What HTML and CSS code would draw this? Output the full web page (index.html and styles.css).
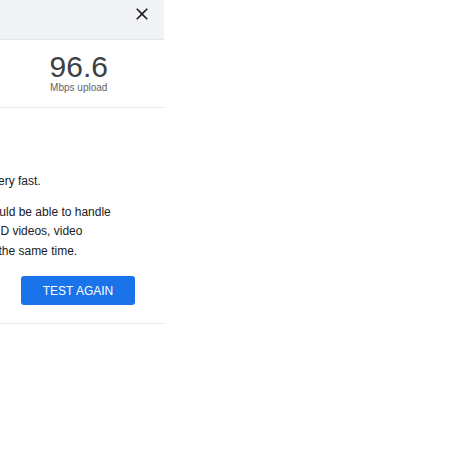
FILE: index.html
```html
<!DOCTYPE html>
<html lang="en">
<head>
<meta charset="utf-8">
<title>Speed test</title>
<link rel="stylesheet" href="styles.css">
</head>
<body>
<div class="panel">
  <div class="header">
    <svg class="close" viewBox="0 0 24 24" width="20" height="20" aria-label="Close">
      <path d="M19 6.41L17.59 5 12 10.59 6.41 5 5 6.41 10.59 12 5 17.59 6.41 19 12 13.41 17.59 19 19 17.59 13.41 12z" fill="#202124"/>
    </svg>
  </div>
  <div class="stats">
    <div class="stat"></div>
    <div class="stat">
      <div class="value">96.6</div>
      <div class="label">Mbps upload</div>
    </div>
  </div>
  <div class="body">
    <p class="msg first">Your Internet connection is very fast.</p>
    <p class="msg">Your Internet connection should be able to handle multiple devices streaming HD videos, video conferencing and gaming at the same time.</p>
    <div class="actions">
      <button class="btn">TEST AGAIN</button>
    </div>
  </div>
</div>
</body>
</html>
```

FILE: styles.css
```css
html, body {
  margin: 0;
  padding: 0;
  background: #ffffff;
  overflow: hidden;
}
body {
  font-family: "Liberation Sans", Arial, sans-serif;
  color: #202124;
}
.panel {
  width: 341px;
  margin-left: -177px;
  background: #ffffff;
}
.header {
  height: 40px;
  box-sizing: border-box;
  background: #f1f3f4;
  border-bottom: 1px solid #e3e5e8;
  display: flex;
  justify-content: flex-end;
  align-items: flex-start;
  padding: 4px 12px 0 0;
}
.close {
  display: block;
}
.stats {
  display: grid;
  grid-template-columns: 1fr 1fr;
  padding: 12px 0 13px;
  border-bottom: 1px solid #e8eaed;
}
.stat {
  display: flex;
  flex-direction: column;
  align-items: center;
}
.value {
  font-size: 30px;
  line-height: 30px;
  color: #3c4043;
}
.label {
  font-size: 10px;
  line-height: 12px;
  color: #5f6368;
}
.body {
  padding: 64px 29px 18px 24px;
  border-bottom: 1px solid #e8eaed;
}
.msg {
  margin: 11px 0 0;
  font-size: 12px;
  line-height: 19.5px;
  color: #202124;
}
.msg.first {
  margin-top: 0;
}
.actions {
  display: flex;
  justify-content: flex-end;
  margin-top: 15px;
}
.btn {
  width: 114px;
  height: 29px;
  border: none;
  border-radius: 3px;
  background: #1a73e8;
  color: #ffffff;
  font-family: "Liberation Sans", Arial, sans-serif;
  font-size: 12px;
  padding: 0;
}
```
